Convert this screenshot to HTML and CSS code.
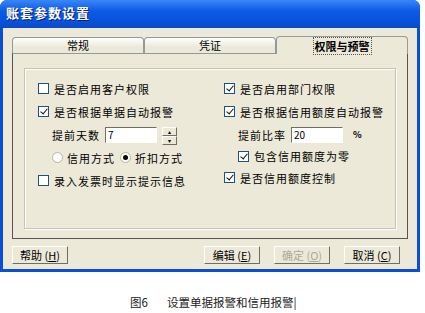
FILE: index.html
```html
<!DOCTYPE html>
<html>
<head>
    <meta charset="UTF-8">
    <title>账套参数设置</title>
    <link rel="stylesheet" href="styles.css">
</head>
<body>
    <div class="win">
        <div class="title">账套参数设置</div>
        <div class="body">
            <div class="tabs">
                <div class="tab">常规</div>
                <div class="tab">凭证</div>
                <div class="tab on"><span class="focus">权限与预警</span></div>
            </div>
            <div class="panel">
                <div class="group">
                    <div class="col left">
                        <div class="row"><span class="cb"></span>是否启用客户权限</div>
                        <div class="row"><span class="cb ck"></span>是否根据单据自动报警</div>
                        <div class="row sub">提前天数<span class="inp">7</span><span class="spin"><i>▴</i><i>▾</i></span></div>
                        <div class="row sub"><span class="rd"></span>信用方式<span class="rd dot"></span>折扣方式</div>
                        <div class="row"><span class="cb"></span>录入发票时显示提示信息</div>
                    </div>
                    <div class="col right">
                        <div class="row"><span class="cb ck"></span>是否启用部门权限</div>
                        <div class="row"><span class="cb ck"></span>是否根据信用额度自动报警</div>
                        <div class="row sub">提前比率<span class="inp">20</span><span class="pct">%</span></div>
                        <div class="row sub2"><span class="cb ck"></span>包含信用额度为零</div>
                        <div class="row"><span class="cb ck"></span>是否信用额度控制</div>
                    </div>
                </div>
            </div>
            <div class="btns">
                <span class="btn">帮助 (<u>H</u>)</span>
                <span class="gap"></span>
                <span class="btn">编辑 (<u>E</u>)</span>
                <span class="btn off">确定 (<u>O</u>)</span>
                <span class="btn">取消 (<u>C</u>)</span>
            </div>
        </div>
    </div>
    <div class="cap">图6<span class="sp"></span>设置单据报警和信用报警|</div>
</body>
</html>
```

FILE: styles.css
```css
*{
    margin: 0;
    padding: 0;
    box-sizing: border-box;
}
body{
    background: #fff;
    font-family: "Noto Sans CJK SC", "Noto Sans", sans-serif;
    font-size: 11px;
    color: #000;
}
.win{
    width: 420px;
    height: 272px;
    background: #0a4fd8;
    border-radius: 7px 7px 0 0;
    padding: 0 3px 3px 3px;
    display: flex;
    flex-direction: column;
}
.title{
    height: 28px;
    line-height: 26px;
    padding-left: 6px;
    color: #fff;
    font-weight: bold;
    font-size: 13px;
    letter-spacing: 1px;
    text-shadow: 1px 1px 0 #0a1d6a;
    background: linear-gradient(#3b86f5, #0b5ae6 40%, #0852db 80%, #0a49c4);
    margin: 0 -3px;
    border-radius: 7px 7px 0 0;
}
.body{
    flex: 1;
    background: #ece9d8;
    padding: 8px 9px 0 9px;
}
.tabs{
    display: flex;
    height: 17px;
    align-items: flex-end;
}
.tab{
    width: 133px;
    height: 16px;
    border: 1px solid #919b9c;
    border-bottom: none;
    border-radius: 4px 4px 0 0;
    background: linear-gradient(#fff, #ece9d8 60%);
    text-align: center;
    line-height: 15px;
}
.tab.on{
    height: 18px;
    margin-bottom: -1px;
    background: #ece9d8;
    position: relative;
    font-weight: bold;
    line-height: 18px;
}
.focus{
    outline: 1px dotted #555;
    padding: 0 1px;
}
.panel{
    height: 186px;
    border: 1px solid #555;
    border-top-color: #919b9c;
    padding: 14px 11px 9px 11px;
}
.group{
    height: 100%;
    border: 1px solid #c8c4b4;
    box-shadow: inset 1px 1px 0 #fff, 1px 1px 0 #fff;
    display: flex;
    padding-top: 8px;
}
.col{
    display: flex;
    flex-direction: column;
}
.left{
    width: 186px;
    padding-left: 13px;
}
.right{
    padding-left: 13px;
}
.row{
    height: 23px;
    display: flex;
    align-items: center;
    letter-spacing: 1px;
    white-space: nowrap;
}
.sub{
    padding-left: 14px;
}
.sub2{
    padding-left: 14px;
    height: 20px;
}
.cb{
    width: 11px;
    height: 11px;
    border: 1px solid #1c5180;
    background: #fff;
    margin-right: 5px;
    position: relative;
}
.ck::after{
    content: "";
    position: absolute;
    left: 3px;
    top: 0px;
    width: 3px;
    height: 6px;
    border: solid #111;
    border-width: 0 1.5px 1.5px 0;
    transform: rotate(40deg);
}
.inp{
    width: 52px;
    height: 16px;
    background: #fff;
    border: 1px solid;
    border-color: #716f64 #fff #fff #716f64;
    margin-left: 5px;
    padding-left: 2px;
    line-height: 14px;
    font-size: 10px;
    letter-spacing: 0;
}
.spin{
    width: 15px;
    height: 16px;
    margin-left: 5px;
    display: flex;
    flex-direction: column;
}
.spin i{
    flex: 1;
    font-style: normal;
    font-size: 6px;
    line-height: 7px;
    text-align: center;
    background: #ece9d8;
    border: 1px solid #aaa;
    border-color: #fff #716f64 #716f64 #fff;
}
.pct{
    margin-left: 10px;
    font-size: 9px;
    font-weight: bold;
}
.rd{
    width: 11px;
    height: 11px;
    border-radius: 50%;
    border: 1px solid #b8b4a8;
    background: #fff;
    margin-right: 4px;
    position: relative;
}
.rd.dot{
    margin-left: 5px;
}
.rd.dot::after{
    content: "";
    position: absolute;
    left: 2px;
    top: 2px;
    width: 5px;
    height: 5px;
    border-radius: 50%;
    background: #000;
}
.btns{
    display: flex;
    padding-top: 7px;
    gap: 14px;
}
.btn{
    width: 56px;
    height: 18px;
    line-height: 16px;
    text-align: center;
    background: #ece9d8;
    border: 1px solid;
    border-color: #fff #716f64 #716f64 #fff;
    font-size: 11px;
}
.btn u{
    text-decoration: underline;
}
.btn.off{
    color: #aca899;
}
.gap{
    width: 108px;
}
.cap{
    padding-top: 22px;
    padding-left: 130px;
    font-family: "Noto Sans CJK SC", serif;
    font-size: 11.5px;
    color: #222;
}
.sp{
    display: inline-block;
    width: 19px;
}
```
